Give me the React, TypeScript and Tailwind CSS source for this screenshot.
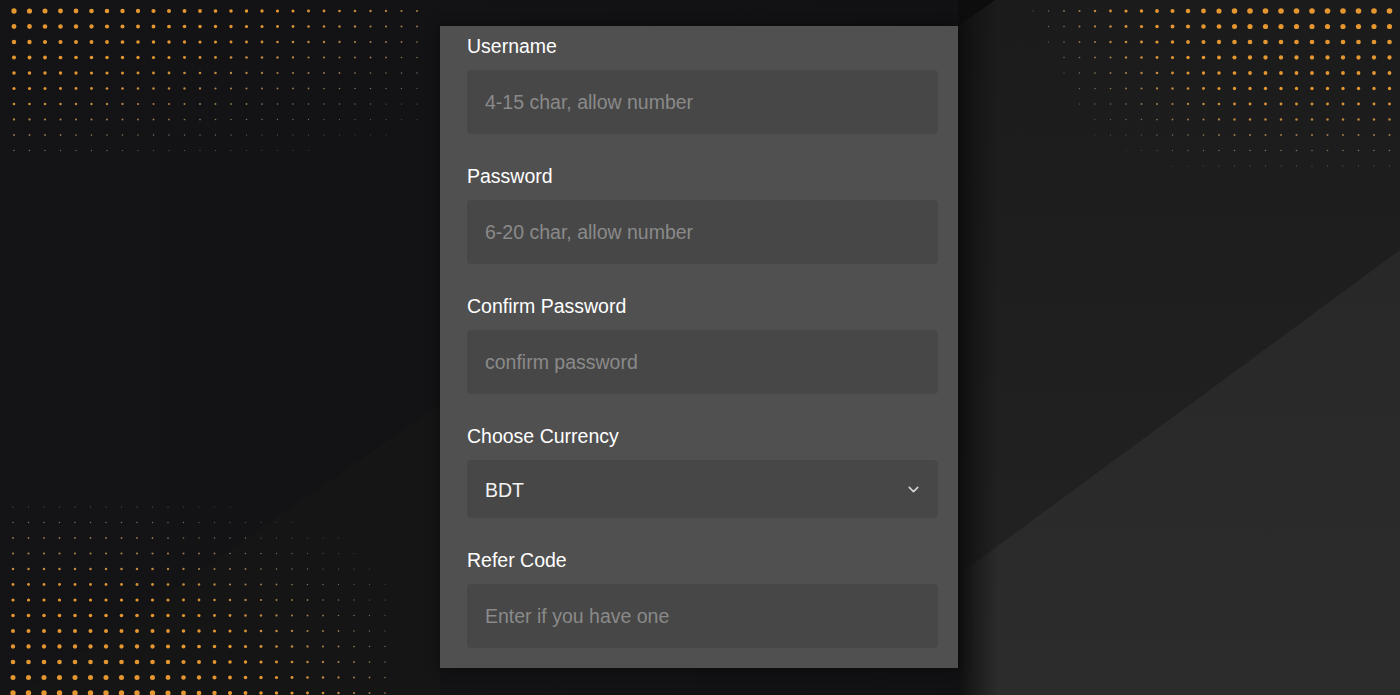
import { ChevronDown } from "lucide-react";

type Dot = { x: number; y: number; r: number; c: string };

const clamp = (v: number, lo = 0, hi = 1) => Math.min(hi, Math.max(lo, v));

function dotColor(r: number) {
  const t = clamp((r - 0.55) / 1.0);
  const gray = [105, 105, 100];
  const orange = [228, 150, 48];
  const mix = gray.map((g, i) => Math.round(g + (orange[i] - g) * t));
  return `rgb(${mix[0]},${mix[1]},${mix[2]})`;
}

function buildDots(): Dot[] {
  const dots: Dot[] = [];
  const step = 15.5;

  // top left
  for (let j = 0; j < 10; j++) {
    for (let i = 0; i < 28; i++) {
      const x = 14 + i * step;
      const y = 11 + j * step;
      if (x > 432) continue;
      const r = 2.7 * (1 - (0.65 * x) / 440) * (1 - 0.08 * j);
      if (r < 0.4) continue;
      dots.push({ x, y, r, c: dotColor(r) });
    }
  }

  // top right
  for (let j = 0; j < 12; j++) {
    for (let i = 0; i < 25; i++) {
      const x = 1033 + i * step;
      const y = 11 + j * step;
      if (x < 1033 + j * 7) continue;
      const k = clamp((x - 1020) / 220);
      const r = 2.8 * (0.15 + 0.85 * k) * (1 - 0.08 * j);
      if (r < 0.4) continue;
      dots.push({ x, y, r, c: dotColor(r) });
    }
  }

  // bottom left
  for (let j = 0; j < 13; j++) {
    for (let i = 0; i < 26; i++) {
      const x = 13 + i * step;
      const y = 507 + j * step;
      if (x > 390) continue;
      const r = 2.7 * (0.2 + (0.8 * j) / 12) * (1 - 0.7 * clamp((x - 150) / 240));
      if (r < 0.4) continue;
      dots.push({ x, y, r, c: dotColor(r) });
    }
  }
  return dots;
}

const DOTS = buildDots();

function Backdrop() {
  return (
    <svg
      className="pointer-events-none absolute inset-0 h-full w-full"
      viewBox="0 0 1400 695"
      preserveAspectRatio="none"
    >
      <defs>
        <linearGradient id="leftShade" x1="0" y1="0" x2="1" y2="0">
          <stop offset="0" stopColor="#141416" />
          <stop offset="0.7" stopColor="#111113" />
          <stop offset="1" stopColor="#0b0b0c" />
        </linearGradient>
        <linearGradient id="rightTop" x1="0" y1="0" x2="0" y2="1">
          <stop offset="0" stopColor="#1b1b1c" />
          <stop offset="1" stopColor="#232323" />
        </linearGradient>
        <linearGradient id="rightLow" x1="0" y1="0" x2="0" y2="1">
          <stop offset="0" stopColor="#282828" />
          <stop offset="1" stopColor="#2c2c2c" />
        </linearGradient>
        <linearGradient id="rightEdge" x1="0" y1="0" x2="1" y2="0">
          <stop offset="0" stopColor="#101011" stopOpacity="1" />
          <stop offset="1" stopColor="#101011" stopOpacity="0" />
        </linearGradient>
      </defs>
      <rect width="1400" height="695" fill="url(#leftShade)" />
      <polygon points="0,709 440,404 440,695 0,695" fill="#151516" />
      <rect x="958" y="0" width="442" height="695" fill="url(#rightTop)" />
      <polygon points="972,565 1400,250 1400,695 958,695 958,575" fill="url(#rightLow)" />
      <rect x="958" y="0" width="40" height="695" fill="url(#rightEdge)" />
      <polygon points="958,0 995,0 958,26" fill="#0d0d0e" />
      {DOTS.map((d, i) => (
        <circle key={i} cx={d.x} cy={d.y} r={d.r} fill={d.c} />
      ))}
    </svg>
  );
}

function Field({ label, placeholder }: { label: string; placeholder: string }) {
  return (
    <div className="mb-[31px] last:mb-0">
      <label className="mb-[13px] block text-[19.5px] leading-[22px] text-white">{label}</label>
      <input
        type="text"
        placeholder={placeholder}
        className="h-16 w-full rounded-[4px] bg-[#474747] px-[18px] text-[19.5px] text-white outline-none placeholder:text-[#8a8a8a]"
      />
    </div>
  );
}

export default function App() {
  return (
    <div
      className="relative h-[695px] w-full overflow-hidden bg-[#121214]"
      style={{ fontFamily: '"Liberation Sans", Arial, sans-serif' }}
    >
      <Backdrop />
      <div className="relative flex justify-center pr-[2px] pt-[26px]">
        <form className="w-[518px] bg-[#505050] pb-5 pl-[27px] pr-5 pt-[9px] shadow-[0_0_12px_rgba(0,0,0,0.45)]">
          <Field label="Username" placeholder="4-15 char, allow number" />
          <Field label="Password" placeholder="6-20 char, allow number" />
          <Field label="Confirm Password" placeholder="confirm password" />

          <div className="mb-[31px]">
            <label className="mb-[13px] block text-[19.5px] leading-[22px] text-white">Choose Currency</label>
            <div className="flex h-[58px] w-full items-center justify-between rounded-[4px] bg-[#474747] pl-[18px] pr-[16px]">
              <span className="pt-[3px] text-[19.5px] text-[#f2f2f2]">BDT</span>
              <ChevronDown size={17} strokeWidth={2.2} className="text-[#d6d6d6]" />
            </div>
          </div>

          <Field label="Refer Code" placeholder="Enter if you have one" />
        </form>
      </div>
    </div>
  );
}
